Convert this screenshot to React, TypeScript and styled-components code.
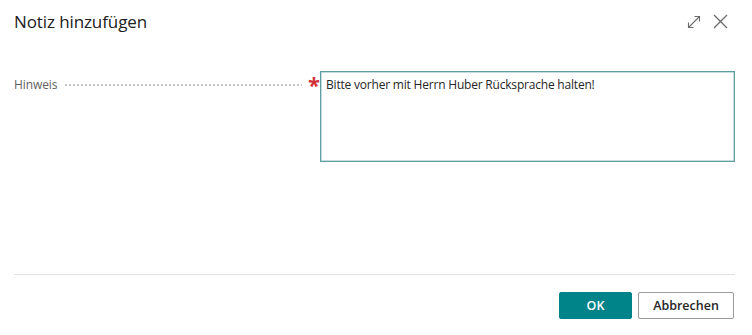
import React from "react";
import styled, { createGlobalStyle } from "styled-components";

const Global = createGlobalStyle`
  html, body { margin: 0; padding: 0; background: #fff; }
  body { font-family: "Segoe UI", "Open Sans", "Noto Sans", sans-serif; color: #212121; }
  * { box-sizing: border-box; }
`;

const Dialog = styled.div`
  width: 752px;
  height: 335px;
  display: flex;
  flex-direction: column;
  padding: 0 17px 0 14px;
`;

const Header = styled.div`
  display: flex;
  align-items: center;
  justify-content: space-between;
  height: 42px;
  padding-top: 1px;
`;

const Title = styled.h1`
  margin: 0;
  font-size: 17px;
  font-weight: 500;
  color: #212121;
  letter-spacing: -0.1px;
`;

const HeaderIcons = styled.div`
  display: flex;
  align-items: center;
  gap: 12px;
  margin-right: 7px;
  color: #6b6b6b;
`;

const IconButton = styled.span`
  display: flex;
  align-items: center;
  justify-content: center;
`;

const Body = styled.div`
  flex: 1;
  padding-top: 29px;
`;

const FieldRow = styled.div`
  display: grid;
  grid-template-columns: 306px 1fr;
  align-items: start;
`;

const LabelCell = styled.div`
  display: flex;
  align-items: center;
  height: 26px;
`;

const Label = styled.span`
  font-size: 12px;
  letter-spacing: -0.1px;
  color: #616161;
  white-space: nowrap;
`;

const Leader = styled.span`
  flex: 1;
  height: 2px;
  margin: 1px 6px 0 7px;
  background-image: radial-gradient(circle, #c4c4c4 0.7px, transparent 0.9px);
  background-size: 4px 2px;
  background-repeat: repeat-x;
`;

const Required = styled.span`
  align-self: flex-start;
  color: #d13438;
  font-size: 22px;
  font-weight: 700;
  line-height: 1;
  margin-top: 2px;
  width: 12px;
  text-align: center;
`;

const TextArea = styled.div`
  height: 91px;
  border: 1px solid #5e9ea0;
  box-shadow: inset 0 0 0 0.5px #8cbcbf;
  padding: 4px 5px;
  font-size: 12px;
  letter-spacing: -0.2px;
  color: #262626;
`;

const Footer = styled.div`
  border-top: 1px solid #e1e1e1;
  height: 61px;
  display: flex;
  justify-content: flex-end;
  align-items: flex-start;
  gap: 6px;
  padding-top: 17px;
  padding-right: 1px;
`;

const Button = styled.button<{ $primary?: boolean }>`
  height: 27px;
  min-width: ${(p) => (p.$primary ? "73px" : "96px")};
  border-radius: 2px;
  font-family: inherit;
  font-size: 12.5px;
  font-weight: 600;
  cursor: pointer;
  border: 1px solid ${(p) => (p.$primary ? "#008489" : "#9a9a9a")};
  background: ${(p) => (p.$primary ? "#008489" : "#fff")};
  color: ${(p) => (p.$primary ? "#fff" : "#262626")};
  padding: 0 12px;
`;

const ExpandIcon = () => (
  <svg width="14" height="14" viewBox="0 0 14 14" fill="none" stroke="#6b6b6b" strokeWidth="1.1">
    <path d="M1.5 12.5 L12.5 1.5" />
    <path d="M7.5 1.5 H12.5 V6.5" />
    <path d="M1.5 7.5 V12.5 H6.5" />
  </svg>
);

const CloseIcon = () => (
  <svg width="15" height="15" viewBox="0 0 15 15" fill="none" stroke="#6b6b6b" strokeWidth="1.3">
    <path d="M1 1 L14 14 M14 1 L1 14" />
  </svg>
);

export default function App() {
  return (
    <>
      <Global />
      <Dialog>
        <Header>
          <Title>Notiz hinzufügen</Title>
          <HeaderIcons>
            <IconButton><ExpandIcon /></IconButton>
            <IconButton><CloseIcon /></IconButton>
          </HeaderIcons>
        </Header>
        <Body>
          <FieldRow>
            <LabelCell>
              <Label>Hinweis</Label>
              <Leader />
              <Required>*</Required>
            </LabelCell>
            <TextArea>Bitte vorher mit Herrn Huber Rücksprache halten!</TextArea>
          </FieldRow>
        </Body>
        <Footer>
          <Button $primary>OK</Button>
          <Button>Abbrechen</Button>
        </Footer>
      </Dialog>
    </>
  );
}
